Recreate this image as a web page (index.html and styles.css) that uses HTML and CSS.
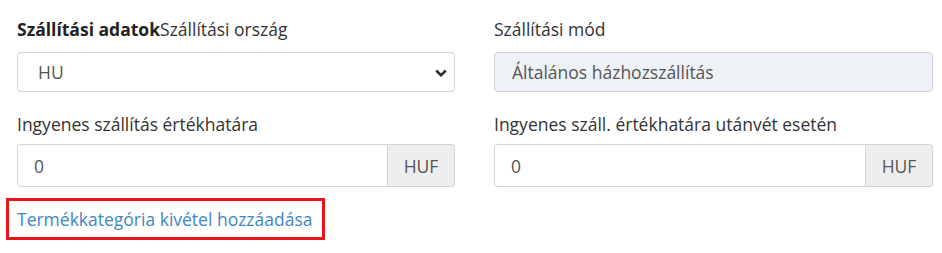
FILE: index.html
```html
<!DOCTYPE html>
<html lang="hu">
<head>
    <meta charset="UTF-8">
    <meta name="viewport" content="width=device-width, initial-scale=1.0">
    <title>Szállítási adatok</title>
    <link rel="stylesheet" href="styles.css">
</head>
<body>
    <div class="shipping">
        <div class="row row-top">
            <div class="field">
                <label class="label"><b>Szállítási adatok</b>Szállítási ország</label>
                <div class="select-wrap">
                    <select class="control select">
                        <option>HU</option>
                    </select>
                    <svg class="chevron" width="12" height="8" viewBox="0 0 12 8">
                        <path d="M1.2 1.5 L6 6.2 L10.8 1.5" fill="none" stroke="#333" stroke-width="2.6"/>
                    </svg>
                </div>
            </div>
            <div class="field">
                <label class="label">Szállítási mód</label>
                <input class="control disabled" type="text" value="Általános házhozszállítás" disabled>
            </div>
        </div>

        <div class="row row-bottom">
            <div class="field">
                <label class="label">Ingyenes szállítás értékhatára</label>
                <div class="input-group">
                    <input class="control group-input" type="text" value="0">
                    <span class="addon">HUF</span>
                </div>
            </div>
            <div class="field">
                <label class="label">Ingyenes száll. értékhatára utánvét esetén</label>
                <div class="input-group">
                    <input class="control group-input" type="text" value="0">
                    <span class="addon">HUF</span>
                </div>
            </div>
        </div>

        <div class="link-box">
            <a href="#" class="add-link">Termékkategória kivétel hozzáadása</a>
        </div>
    </div>
</body>
</html>
```

FILE: styles.css
```css
*{
    padding: 0;
    margin: 0;
    box-sizing: border-box;
}

body{
    background: #fff;
    font-family: "Open Sans", "Liberation Sans", sans-serif;
    font-size: 17.5px;
    color: #333;
}

.shipping{
    padding: 17px 0 0 17px;
}

.row{
    display: grid;
    grid-template-columns: 438px 439px;
    column-gap: 39px;
}

.row-bottom{
    margin-top: 20px;
}

.label{
    display: block;
    height: 24px;
    line-height: 24px;
    margin-bottom: 11px;
    color: #333;
    white-space: nowrap;
}

.row-bottom .label{
    margin-bottom: 8px;
}

.label b{
    font-weight: 700;
    color: #222;
}

.control{
    display: block;
    width: 100%;
    height: 40px;
    padding: 0 17px;
    border: 1px solid #cfd4dc;
    border-radius: 4px;
    background: #fff;
    font-family: inherit;
    font-size: 17.5px;
    color: #555;
    outline: none;
}

.select-wrap{
    position: relative;
}

.select{
    appearance: none;
    -webkit-appearance: none;
    padding-left: 20px;
}

.chevron{
    position: absolute;
    right: 8px;
    top: 17px;
}

.disabled{
    background: #eef1f5;
    color: #555;
}

.input-group{
    display: flex;
    height: 43px;
}

.group-input{
    flex: 1;
    height: 43px;
    padding-left: 16px;
    border-radius: 4px 0 0 4px;
}

.addon{
    width: 67px;
    display: flex;
    align-items: center;
    justify-content: center;
    border: 1px solid #cfd4dc;
    border-left: none;
    border-radius: 0 4px 4px 0;
    background: #eee;
    color: #555;
}

.link-box{
    width: 319px;
    height: 42px;
    margin: 11px 0 0 -11px;
    padding: 0 0 0 8px;
    border: 3px solid #e8141c;
    display: flex;
    align-items: center;
}

.add-link{
    color: #3d87c4;
    text-decoration: none;
}
```
